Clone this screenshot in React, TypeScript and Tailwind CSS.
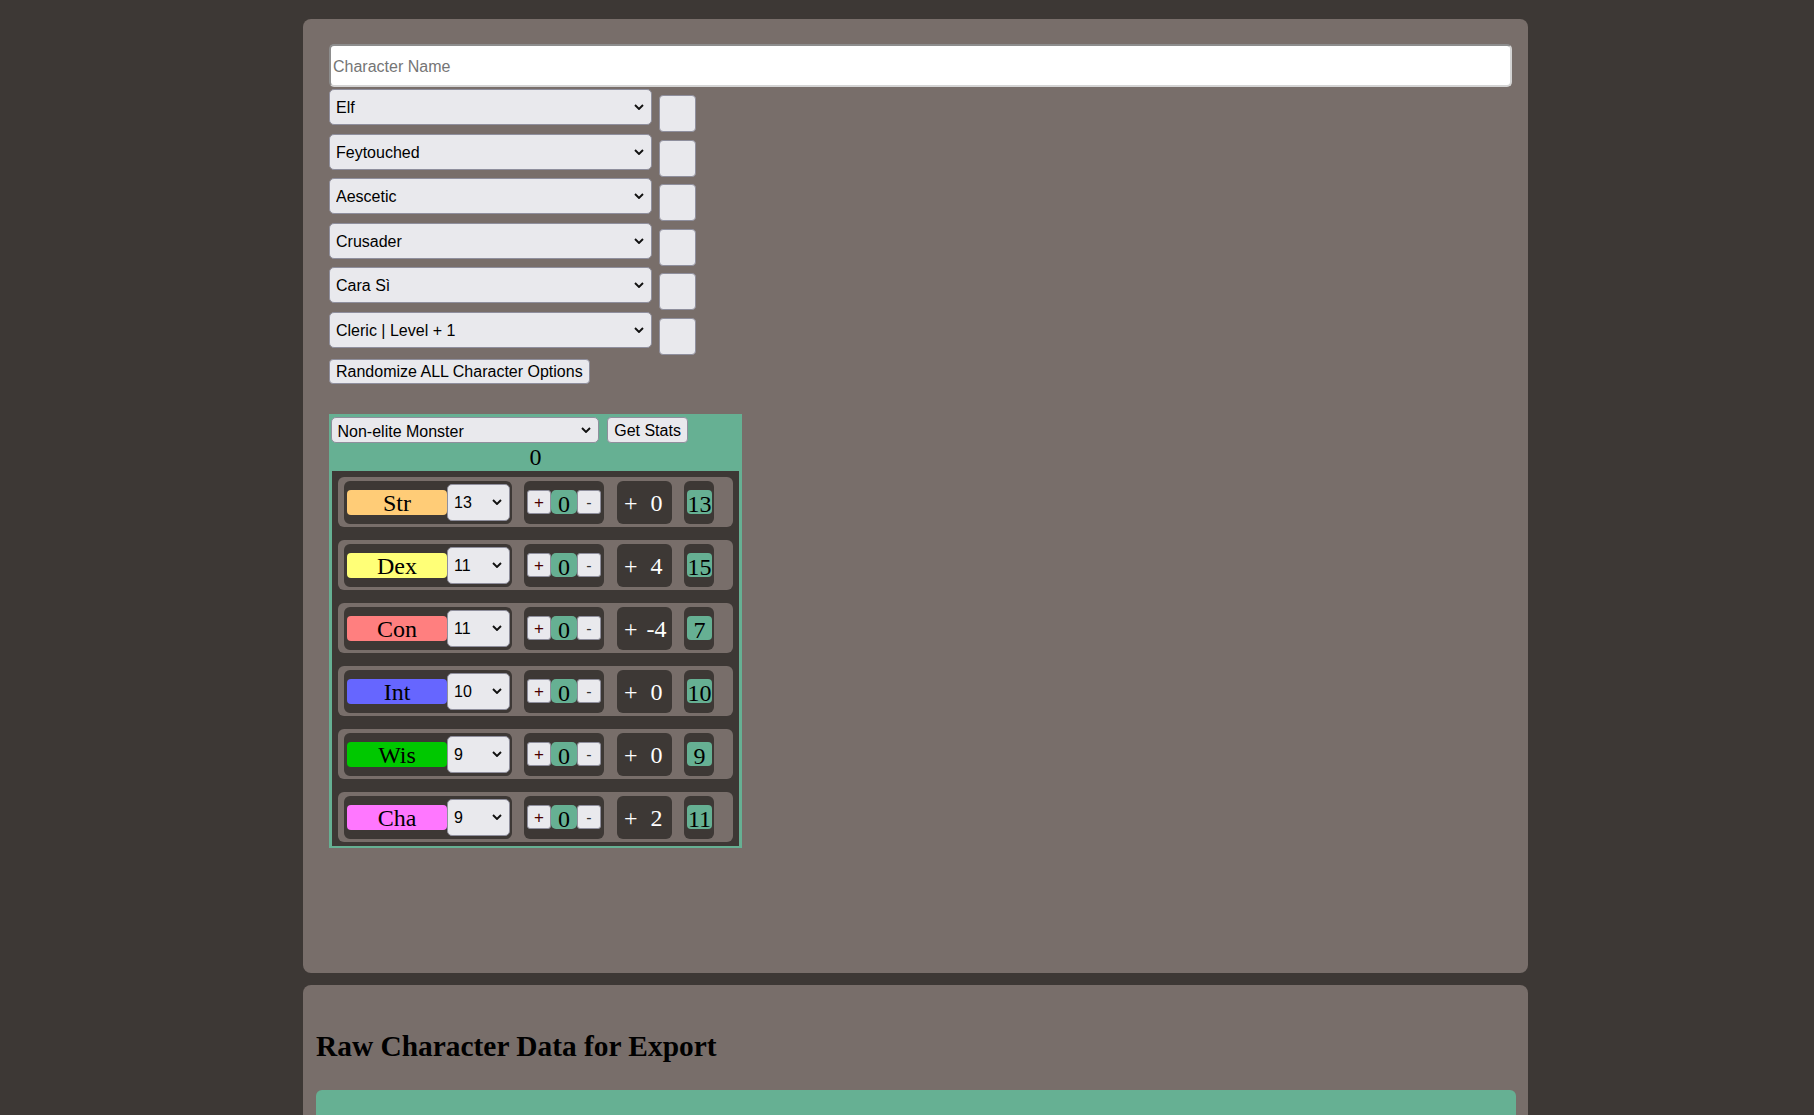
import React from "react";

const sans = "font-['Liberation_Sans',Arial,sans-serif]";
const serif = "font-['Liberation_Serif','Times_New_Roman',serif]";

const choices = ["Elf", "Feytouched", "Aescetic", "Crusader", "Cara Sì", "Cleric | Level + 1"];

const stats = [
  { name: "Str", label: "bg-[#ffcc77]", base: 13, mod: "0", total: 13 },
  { name: "Dex", label: "bg-[#ffff77]", base: 11, mod: "4", total: 15 },
  { name: "Con", label: "bg-[#ff7f7f]", base: 11, mod: "-4", total: 7 },
  { name: "Int", label: "bg-[#6666ff]", base: 10, mod: "0", total: 10 },
  { name: "Wis", label: "bg-[#00c800]", base: 9, mod: "0", total: 9 },
  { name: "Cha", label: "bg-[#ff77ff]", base: 9, mod: "2", total: 11 },
];

function Chevron() {
  return (
    <svg width="10" height="6" viewBox="0 0 10 6" className="pointer-events-none absolute right-[8px] top-1/2 -translate-y-1/2">
      <path d="M1 1 L5 5 L9 1" fill="none" stroke="#111" strokeWidth="1.9" />
    </svg>
  );
}

function Dropdown({ value, className }: { value: string; className: string }) {
  return (
    <span className={`relative block shrink-0 ${className}`}>
      <select
        defaultValue={value}
        className={`h-full w-full appearance-none rounded-[5px] border border-[#8f8f9d] bg-[#e9e9ed] pl-[6px] pt-[2px] text-[16px] text-black outline-none ${sans}`}
      >
        <option>{value}</option>
      </select>
      <Chevron />
    </span>
  );
}

function StatRow({ s }: { s: (typeof stats)[number] }) {
  return (
    <div className="flex h-[50px] items-start rounded-[6px] bg-[#786e6a] pl-[6px] pt-[4px]">
      <div className="flex h-[43px] w-[168px] items-center rounded-[6px] bg-[#3d3835] pl-[3px]">
        <div className={`h-[25px] w-[100px] rounded-[4px] text-center text-[24px] leading-[27px] text-black ${serif} ${s.label}`}>
          {s.name}
        </div>
        <Dropdown value={String(s.base)} className="h-[37px] w-[63px]" />
      </div>
      <div className="ml-[12px] flex h-[43px] w-[80px] items-center rounded-[6px] bg-[#3d3835] pl-[3px]">
        <button className={`h-[24px] w-[24px] rounded-[3px] border border-[#8f8f9d] bg-[#e9e9ed] pt-[2px] text-[17px] leading-[20px] text-[#4a0000] ${sans}`}>+</button>
        <span className={`h-[24px] w-[26px] rounded-[5px] bg-[#66b093] text-center text-[24px] leading-[28px] text-black ${serif}`}>0</span>
        <button className={`h-[24px] w-[24px] rounded-[3px] border border-[#8f8f9d] bg-[#e9e9ed] pt-[2px] text-[16px] leading-[20px] text-[#333] ${sans}`}>-</button>
      </div>
      <div className={`ml-[13px] flex h-[43px] w-[55px] items-center rounded-[6px] bg-[#3d3835] pl-[7px] pt-[1px] text-[24px] text-white ${serif}`}>
        <span>+</span>
        <span className="ml-[4px] w-[30px] shrink-0 text-center">{s.mod}</span>
      </div>
      <div className="ml-[12px] flex h-[43px] w-[30px] items-center rounded-[6px] bg-[#3d3835] pl-[3px]">
        <span className={`h-[24px] min-w-[25px] rounded-[4px] bg-[#66b093] text-center text-[24px] leading-[28px] text-black ${serif}`}>
          {s.total}
        </span>
      </div>
    </div>
  );
}

export default function App() {
  return (
    <div className={`h-[1115px] overflow-hidden bg-[#3d3835] pt-[19px] ${sans}`}>
      <section className="ml-[303px] h-[954px] w-[1225px] rounded-[8px] bg-[#786e6a] pl-[26px] pr-[16px] pt-[25px]">
        <input
          placeholder="Character Name"
          className="block h-[43px] w-full rounded-[5px] border-2 border-[#8d8d8d] border-b-[#d4d4d4] border-r-[#d4d4d4] bg-white pl-[2px] pt-[2px] text-[16px] text-black outline-none placeholder:text-[#757575]"
        />
        <div className="mt-[2px]">
          {choices.map((c) => (
            <div key={c} className="flex h-[44.6px] items-start">
              <Dropdown value={c} className="h-[36px] w-[323px]" />
              <button className="ml-[7px] mt-[6px] h-[37px] w-[37px] rounded-[4px] border border-[#8f8f9d] bg-[#e9e9ed]" />
            </div>
          ))}
        </div>
        <button className="mt-[2px] h-[25px] rounded-[4px] border border-[#8f8f9d] bg-[#e9e9ed] px-[6px] pt-[2px] text-[16px] leading-[20px] text-black">
          Randomize ALL Character Options
        </button>
        <div className="mt-[29.5px] w-[413px] bg-[#66b093] px-[1.5px] pb-[2.5px] pt-[3.5px]">
          <div className="flex items-center">
            <Dropdown value="Non-elite Monster" className="h-[25.6px] w-[268px]" />
            <button className="ml-[8.7px] h-[25.6px] rounded-[4px] border border-[#8f8f9d] bg-[#e9e9ed] px-[6px] pt-[2px] text-[16px] leading-[20px] text-black">
              Get Stats
            </button>
          </div>
          <div className={`h-[28px] text-center text-[24px] leading-[29px] text-black ${serif}`}>0</div>
          <div className="mx-[1.5px] flex flex-col gap-[13px] bg-[#3d3835] px-[6px] pb-[4px] pt-[6px]">
            {stats.map((s) => (
              <StatRow key={s.name} s={s} />
            ))}
          </div>
        </div>
      </section>
      <section className="ml-[303px] mt-[12px] w-[1225px] rounded-t-[8px] bg-[#786e6a] px-[13px] pt-[45px]">
        <h2 className={`text-[29.4px] font-bold leading-[33px] text-black ${serif}`}>Raw Character Data for Export</h2>
        <div className="mt-[27px] h-[200px] w-[1200px] rounded-[6px] bg-[#66b093]" />
      </section>
    </div>
  );
}
